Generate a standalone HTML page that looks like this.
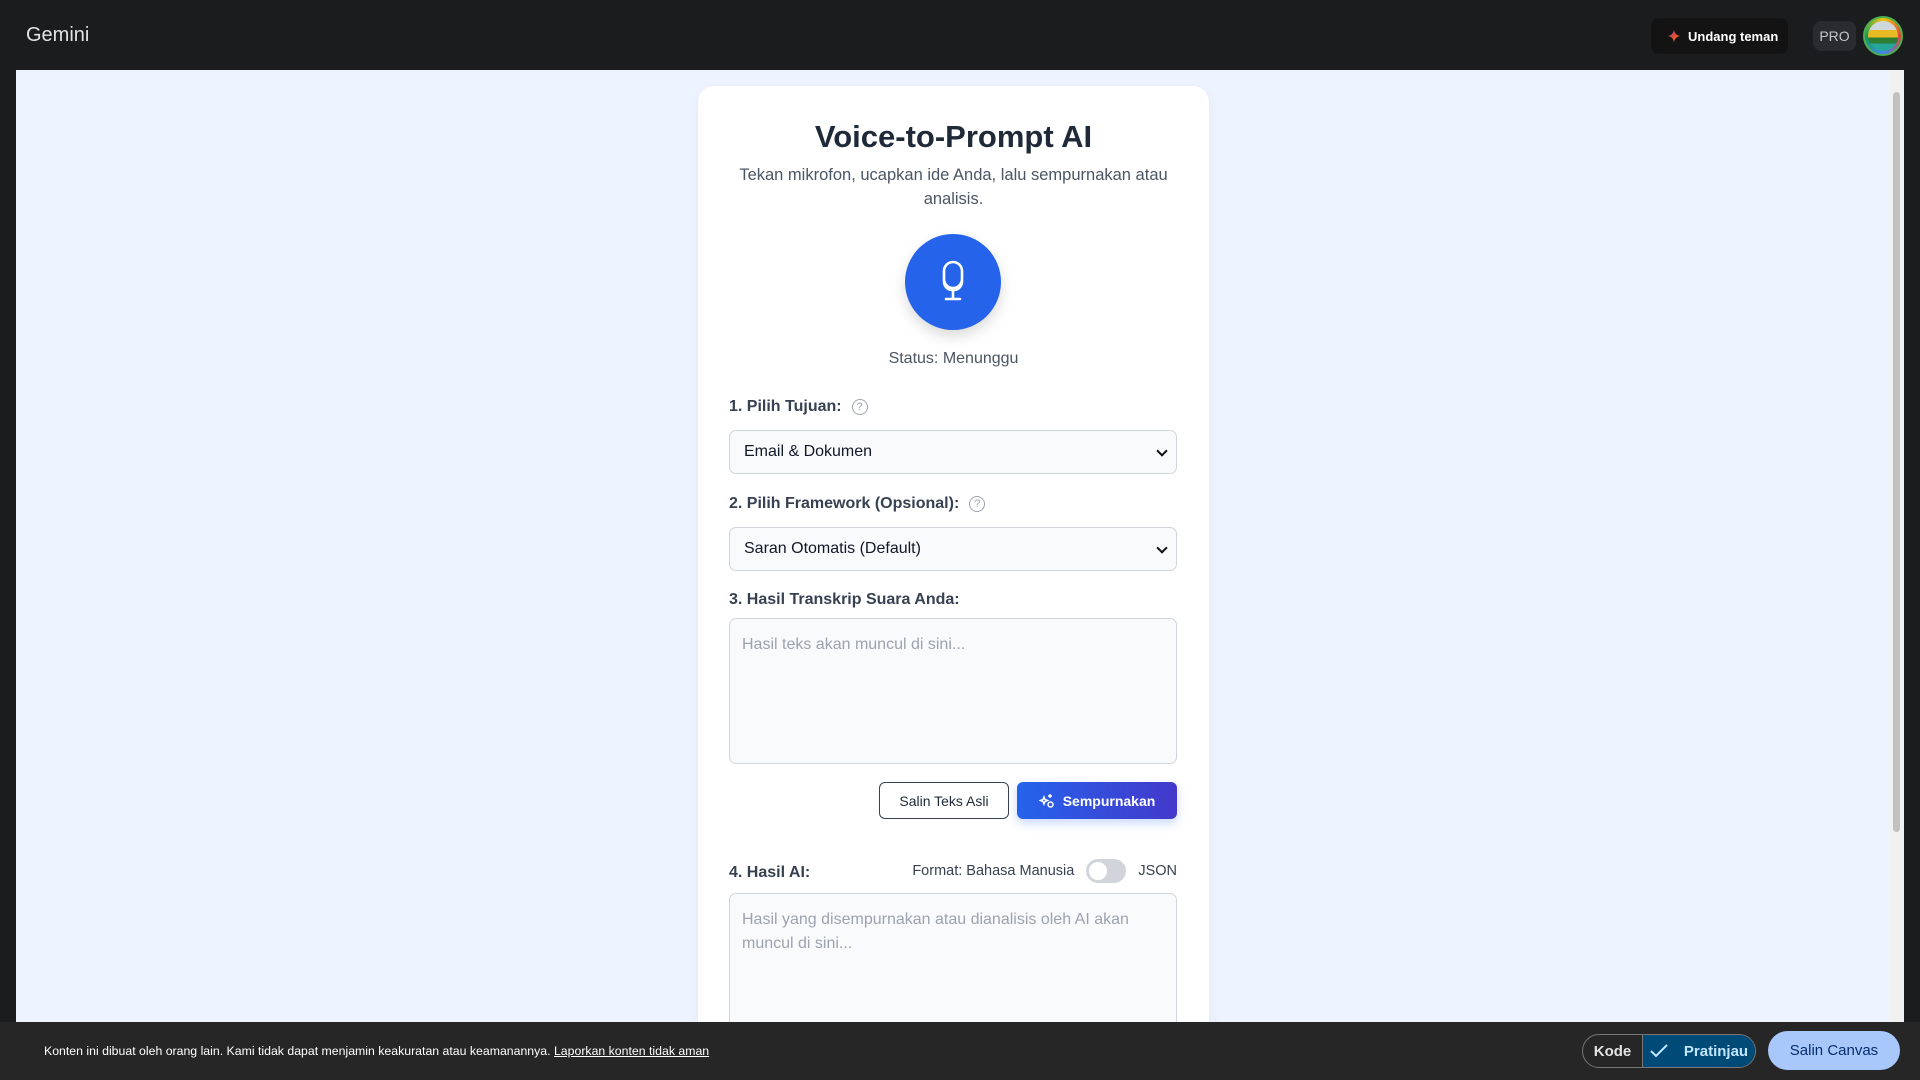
<!DOCTYPE html>
<html><head><meta charset="utf-8"><style>
*{box-sizing:border-box;margin:0;padding:0}
body{width:1920px;height:1080px;overflow:hidden;background:#1b1c1e;font-family:"Liberation Sans",sans-serif;position:relative}
.top{position:absolute;left:0;top:0;width:1920px;height:70px;background:#1b1c1e}
.logo{position:absolute;left:26px;top:24px;color:#e3e3e3;font-size:20px}
.inv{position:absolute;left:1651px;top:18px;width:137px;height:36px;background:#131314;border-radius:8px;color:#fff;font-size:13px;font-weight:bold;display:flex;align-items:center;padding-left:16px;gap:7px}
.pro{position:absolute;left:1813px;top:21px;width:43px;height:30px;background:#2a2b2e;border-radius:8px;color:#c4c7c5;font-size:14px;display:flex;align-items:center;justify-content:center}
.av{position:absolute;left:1863px;top:16px;width:40px;height:40px;border-radius:50%;border:2px solid #4caf50;background:conic-gradient(#f4c20d,#db4437,#4285f4,#0f9d58,#f4c20d);overflow:hidden}
.av:after{content:"";position:absolute;left:3px;top:3px;right:3px;bottom:3px;border-radius:50%;background:linear-gradient(#cfd8dc 30%,#e8b923 30% 55%,#2e7d32 55% 75%,#26a69a 75%)}
.main{position:absolute;left:16px;top:70px;width:1873px;height:952px;background:#eef4ff;overflow:hidden}
.sb{position:absolute;left:1889px;top:70px;width:15px;height:952px;background:#f1f1f1}
.sb .th{position:absolute;left:4px;top:22px;width:7px;height:740px;background:#c1c1c1;border-radius:4px}
.card{position:absolute;left:682px;top:16px;width:511px;height:1000px;background:#fff;border-radius:16px;box-shadow:0 4px 14px rgba(0,0,0,.05)}
h1{position:absolute;left:0;width:511px;top:33px;text-align:center;font-size:31px;color:#1f2937;font-weight:bold}
.sub{position:absolute;left:24px;width:463px;top:77px;text-align:center;font-size:16.5px;line-height:24px;color:#4b5563}
.mic{position:absolute;left:207px;top:148px;width:96px;height:96px;border-radius:50%;background:#2563eb;box-shadow:0 6px 14px rgba(0,0,0,.15);display:flex;align-items:center;justify-content:center}
.st{position:absolute;left:0;width:511px;top:264px;text-align:center;font-size:16px;color:#4b5563}
.lbl{position:absolute;left:31px;font-size:16px;font-weight:bold;color:#374151;display:flex;align-items:center;gap:10px}
.q{width:16px;height:16px;border:1.3px solid #9ca3af;border-radius:50%;font-size:11px;color:#9ca3af;font-weight:normal;display:flex;align-items:center;justify-content:center}
.sel{position:absolute;left:31px;width:448px;height:44px;border:1px solid #d1d5db;border-radius:7px;background:#f9fafb;font-size:16px;color:#111827;padding-left:14px;display:flex;align-items:center}
.sel:after{content:"";position:absolute;right:10px;top:16px;width:6px;height:6px;border-right:2px solid #111;border-bottom:2px solid #111;transform:rotate(45deg)}
.ta{position:absolute;left:31px;width:448px;border:1px solid #d1d5db;border-radius:7px;background:#f9fafb;font-size:16px;color:#9ca3af;padding:14px 12px;line-height:24px}
.b1{position:absolute;left:181px;top:696px;width:130px;height:37px;border:1px solid #374151;border-radius:6px;font-size:14px;color:#1f2937;display:flex;align-items:center;justify-content:center}
.b2{position:absolute;left:319px;top:696px;width:160px;height:37px;border-radius:6px;background:linear-gradient(90deg,#2563eb,#4338ca);color:#fff;font-weight:bold;font-size:14px;display:flex;align-items:center;justify-content:center;gap:8px;box-shadow:0 4px 10px rgba(37,99,235,.25)}
.fmt{position:absolute;right:32px;top:773px;font-size:14.5px;color:#374151;display:flex;align-items:center;gap:12px}
.tg{width:40px;height:24px;border-radius:12px;background:#d1d5db;position:relative}
.tg:after{content:"";position:absolute;left:3px;top:3px;width:18px;height:18px;border-radius:50%;background:#fff}
.bot{position:absolute;left:0;top:1022px;width:1920px;height:58px;background:#262626}
.note{position:absolute;left:44px;top:22px;color:#fff;font-size:12.3px}
.note u{color:#fff}
.seg{position:absolute;left:1582px;top:12px;width:174px;height:34px;border:1px solid #777;border-radius:17px;overflow:hidden;display:flex}
.seg .k{width:59px;color:#e3e3e3;font-weight:bold;font-size:15px;display:flex;align-items:center;justify-content:center}
.seg .p{flex:1;background:#004a77;color:#c2e7ff;font-weight:bold;font-size:15px;display:flex;align-items:center;justify-content:center;gap:16px;border-left:1px solid #777}
.sc{position:absolute;left:1768px;top:9px;width:132px;height:39px;border-radius:20px;background:#a8c7fa;color:#062e6f;font-size:15px;display:flex;align-items:center;justify-content:center}
</style></head><body>
<div class="top">
<div class="logo">Gemini</div>
<div class="inv"><svg width="14" height="14" viewBox="0 0 24 24"><defs><linearGradient id="g" x1="0" y1="0" x2="1" y2="1"><stop offset="0" stop-color="#4285f4"/><stop offset=".5" stop-color="#ea4335"/><stop offset="1" stop-color="#fbbc04"/></linearGradient></defs><path d="M12 0C12 7 17 12 24 12C17 12 12 17 12 24C12 17 7 12 0 12C7 12 12 7 12 0Z" fill="url(#g)"/></svg>Undang teman</div>
<div class="pro">PRO</div>
<div class="av"></div>
</div>
<div class="main">
<div class="card">
<h1>Voice-to-Prompt AI</h1>
<div class="sub">Tekan mikrofon, ucapkan ide Anda, lalu sempurnakan atau analisis.</div>
<div class="mic"><svg width="34" height="46" viewBox="0 0 34 46" fill="none" stroke="#fff" stroke-width="2.6" stroke-linecap="round"><rect x="8" y="3" width="18" height="26" rx="9"/><path d="M8 22c0 6 4 9 9 9s9-3 9-9"/><path d="M17 31v9M10 40h14"/></svg></div>
<div class="st">Status: Menunggu</div>
<div class="lbl" style="top:312px">1. Pilih Tujuan: <span class="q">?</span></div>
<div class="sel" style="top:344px">Email &amp; Dokumen</div>
<div class="lbl" style="top:409px">2. Pilih Framework (Opsional): <span class="q">?</span></div>
<div class="sel" style="top:441px">Saran Otomatis (Default)</div>
<div class="lbl" style="top:505px">3. Hasil Transkrip Suara Anda:</div>
<div class="ta" style="top:532px;height:146px">Hasil teks akan muncul di sini...</div>
<div class="b1">Salin Teks Asli</div>
<div class="b2"><svg width="16" height="16" viewBox="0 0 16 16" fill="none" stroke="#fff" stroke-width="1.5"><path d="M5 4l1 2.5L8.5 7.5 6 8.5 5 11 4 8.5 1.5 7.5 4 6.5z"/><circle cx="11.5" cy="11.5" r="2.5"/><path d="M11 1v4M9 3h4"/></svg>Sempurnakan</div>
<div class="lbl" style="top:778px">4. Hasil AI:</div>
<div class="fmt">Format: Bahasa Manusia <span class="tg"></span> JSON</div>
<div class="ta" style="top:807px;height:200px">Hasil yang disempurnakan atau dianalisis oleh AI akan muncul di sini...</div>
</div>
</div>
<div class="sb"><div class="th"></div></div>
<div class="bot">
<div class="note">Konten ini dibuat oleh orang lain. Kami tidak dapat menjamin keakuratan atau keamanannya. <u>Laporkan konten tidak aman</u></div>
<div class="seg"><div class="k">Kode</div><div class="p"><svg width="18" height="14" viewBox="0 0 18 14" fill="none" stroke="#c2e7ff" stroke-width="2"><path d="M1 7l5 5L17 1"/></svg>Pratinjau</div></div>
<div class="sc">Salin Canvas</div>
</div>
</body></html>
